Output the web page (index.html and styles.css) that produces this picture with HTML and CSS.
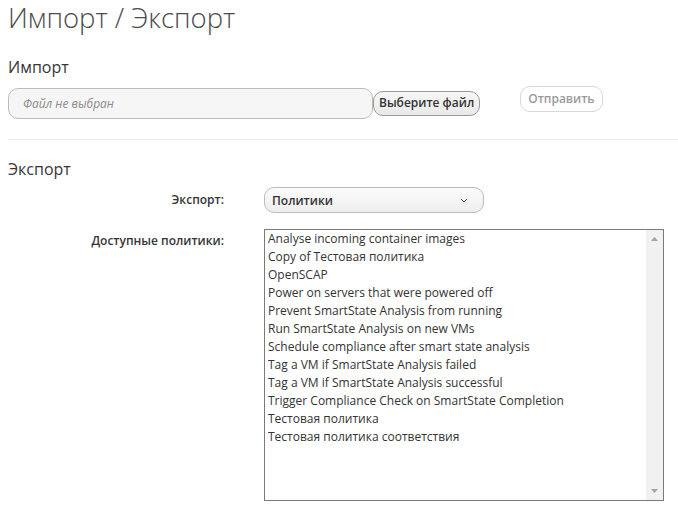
FILE: index.html
```html
<!DOCTYPE html>
<html lang="ru">
<head>
<meta charset="utf-8">
<link rel="stylesheet" href="styles.css">
</head>
<body>
<h1 class="page-title">Импорт / Экспорт</h1>

<h3 class="section-title">Импорт</h3>
<div class="import-row">
  <div class="file-field">Файл не выбран</div>
  <button class="btn btn-file">Выберите файл</button>
  <button class="btn btn-submit" disabled>Отправить</button>
</div>

<hr class="divider">

<h3 class="section-title">Экспорт</h3>
<div class="form-grid">
  <label class="form-label label-select">Экспорт:</label>
  <div class="select-box">
    <span>Политики</span>
    <svg class="chev" width="8" height="5" viewBox="0 0 8 5"><path d="M1 1l3 3 3-3" fill="none" stroke="#555" stroke-width="1"/></svg>
  </div>

  <label class="form-label label-list">Доступные политики:</label>
  <div class="listbox">
    <ul class="items">
      <li>Analyse incoming container images</li>
      <li>Copy of Тестовая политика</li>
      <li>OpenSCAP</li>
      <li>Power on servers that were powered off</li>
      <li>Prevent SmartState Analysis from running</li>
      <li>Run SmartState Analysis on new VMs</li>
      <li>Schedule compliance after smart state analysis</li>
      <li>Tag a VM if SmartState Analysis failed</li>
      <li>Tag a VM if SmartState Analysis successful</li>
      <li>Trigger Compliance Check on SmartState Completion</li>
      <li>Тестовая политика</li>
      <li>Тестовая политика соответствия</li>
    </ul>
    <div class="scrollbar">
      <svg width="7" height="4" viewBox="0 0 7 4"><path d="M0 4L3.5 0 7 4z" fill="#a3a3a3"/></svg>
      <svg width="7" height="4" viewBox="0 0 7 4"><path d="M0 0L3.5 4 7 0z" fill="#a3a3a3"/></svg>
    </div>
  </div>
</div>
</body>
</html>
```

FILE: styles.css
```css
html, body {
  margin: 0;
  padding: 0;
  background: #fff;
}
body {
  padding: 0 0 0 8px;
  font-family: "Open Sans", "Liberation Sans", sans-serif;
  color: #363636;
  width: 670px;
  overflow: hidden;
}
.page-title {
  margin: 0;
  padding-top: 1px;
  font-size: 27.5px;
  font-weight: 300;
  line-height: 34px;
  color: #4b4b4b;
}
.section-title {
  margin: 0;
  font-size: 16px;
  font-weight: 400;
  line-height: 22px;
  color: #363636;
}
.page-title + .section-title {
  margin-top: 21px;
}
.import-row {
  display: flex;
  align-items: center;
  margin-top: 9px;
  height: 32px;
}
.file-field {
  box-sizing: border-box;
  width: 365px;
  height: 31px;
  border: 1px solid #bbb;
  border-radius: 10px;
  background: #f6f6f6;
  padding-left: 14px;
  font-size: 12px;
  font-style: italic;
  color: #8c8c8c;
  line-height: 29px;
}
.btn {
  font-family: "Open Sans", "Liberation Sans", sans-serif;
  font-size: 12px;
  font-weight: 600;
  border-radius: 10px;
  padding: 0 6px;
  line-height: 22px;
  cursor: pointer;
}
.btn-file {
  margin-left: 0;
  height: 25px;
  border: 1px solid #999;
  background: linear-gradient(#f7f7f7, #e9e9e9);
  color: #333;
  margin-top: 0;
  padding: 0 5px;
}
.btn-submit {
  margin-left: 40px;
  height: 26px;
  border: 1px solid #d8d8d8;
  background: #fff;
  color: #9a9a9a;
  margin-top: -9px;
  padding: 0 7px;
}
.divider {
  border: 0;
  border-top: 1px solid #eee;
  margin: 20px 0 0 0;
}
.divider + .section-title {
  margin-top: 18px;
}
.form-grid {
  display: grid;
  grid-template-columns: 216px 400px;
  column-gap: 40px;
  row-gap: 16px;
  margin-top: 7px;
}
.form-label {
  text-align: right;
  font-size: 12px;
  font-weight: 600;
  color: #363636;
}
.label-select {
  line-height: 25px;
}
.label-list {
  line-height: 24px;
}
.select-box {
  box-sizing: border-box;
  width: 220px;
  height: 26px;
  border: 1px solid #bbb;
  border-radius: 10px;
  background: linear-gradient(#fbfbfb, #eeeeee);
  display: flex;
  align-items: center;
  justify-content: space-between;
  padding: 0 15px 0 7px;
  font-size: 12px;
  font-weight: 600;
  color: #333;
}
.chev {
  display: block;
}
.listbox {
  box-sizing: border-box;
  width: 400px;
  height: 272px;
  border: 1px solid #7a7a7a;
  display: flex;
}
.items {
  list-style: none;
  margin: 0;
  padding: 0 0 0 3px;
  flex: 1;
  font-size: 12px;
  line-height: 18px;
  color: #333;
}
.scrollbar {
  width: 17px;
  background: #f1f1f1;
  display: flex;
  flex-direction: column;
  justify-content: space-between;
  align-items: center;
  padding: 7px 0 7px;
}
.scrollbar svg {
  display: block;
}
```
